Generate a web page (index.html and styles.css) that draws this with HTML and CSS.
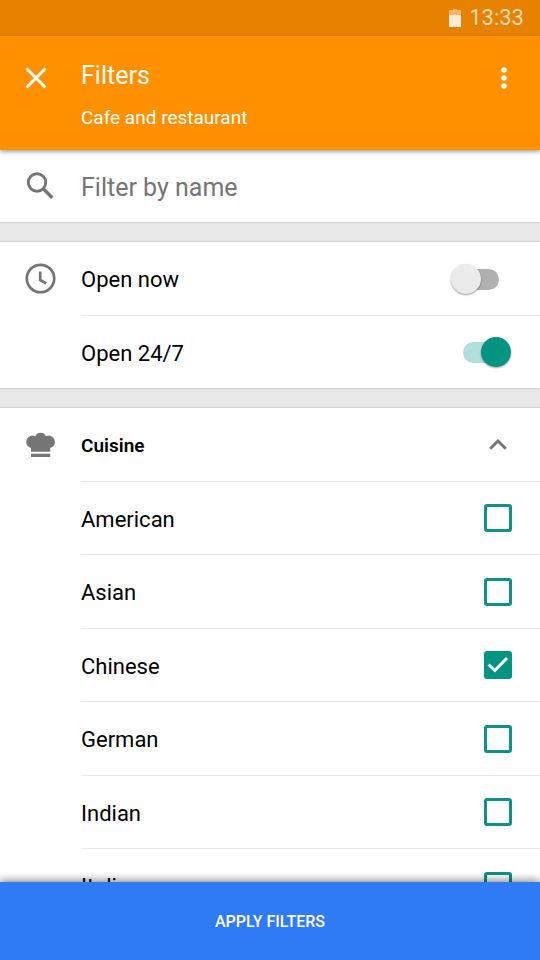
FILE: index.html
```html
<!DOCTYPE html>
<html lang="en">
<head>
<meta charset="utf-8">
<meta name="viewport" content="width=device-width, initial-scale=1">
<title>Filters</title>
<link rel="stylesheet" href="styles.css">
</head>
<body>
<div class="screen">
  <div class="status-bar">
    <svg class="battery" viewBox="0 0 12 18" aria-hidden="true">
      <path d="M4 0h4v1h4v5H0V1h4z" fill="#f3b46a"/>
      <path d="M0 6h12v12H0z" fill="#fdecd5"/>
    </svg>
    <time>13:33</time>
  </div>

  <header class="app-bar">
    <button class="icon-button" type="button" aria-label="Close">
      <svg class="icon-close" viewBox="0 0 22 22"><path d="M1.500 1.500l19 19m0-19l-19 19" fill="none" stroke="#fff" stroke-width="2.900"/></svg>
    </button>
    <div class="titles">
      <h1>Filters</h1>
      <p>Cafe and restaurant</p>
    </div>
    <button class="icon-button" type="button" aria-label="More options">
      <svg class="icon-more" viewBox="0 0 6 22" fill="#fff"><circle cx="3" cy="3" r="2.700"/><circle cx="3" cy="11" r="2.700"/><circle cx="3" cy="19" r="2.700"/></svg>
    </button>
  </header>

  <main class="content">
    <section class="panel search">
      <svg class="lead-icon" viewBox="0 0 32 32" aria-hidden="true" fill="none" stroke="#757575">
        <circle cx="12" cy="12.500" r="8.700" stroke-width="2.900"/>
        <path d="M18 18.500l9.300 9.300" stroke-width="3.400"/>
      </svg>
      <input class="search-input" type="text" placeholder="Filter by name" aria-label="Filter by name">
    </section>

    <section class="panel">
      <div class="row">
        <svg class="lead-icon" viewBox="0 0 32 32" aria-hidden="true" fill="none" stroke="#757575">
          <circle cx="15.500" cy="15.500" r="13.700" stroke-width="2.700"/>
          <path d="M15.200 8.500v8.500l6 3.500" stroke-width="2.700"/>
        </svg>
        <div class="row-body">
          <label for="open-now">Open now</label>
          <input class="switch" id="open-now" type="checkbox" role="switch">
        </div>
      </div>
      <div class="row">
        <div class="row-body">
          <label for="open-always">Open 24/7</label>
          <input class="switch" id="open-always" type="checkbox" role="switch" checked>
        </div>
      </div>
    </section>

    <section class="panel">
      <div class="row row-heading">
        <svg class="lead-icon" viewBox="0 0 32 32" aria-hidden="true" fill="#757575">
          <path d="M6 22.700V19A6.300 6.300 0 0 1 7.500 6.600Q9 6.600 10.300 7.200A5.800 5.800 0 0 1 20.900 7.200Q22.200 6.600 23.700 6.600A6.300 6.300 0 0 1 25.200 19V22.700z"/>
          <path d="M6 24.700h19.200v3.300H6z"/>
        </svg>
        <div class="row-body">
          <h2>Cuisine</h2>
          <button class="icon-button" type="button" aria-label="Collapse cuisine" aria-expanded="true">
            <svg class="icon-chevron" viewBox="0 0 18 12"><path d="M1.200 9.800L9 2l7.800 7.800" fill="none" stroke="#757575" stroke-width="2.900"/></svg>
          </button>
        </div>
      </div>
      <ul class="options">
        <li class="row-body"><label for="american">American</label><input class="check" id="american" type="checkbox"></li>
        <li class="row-body"><label for="asian">Asian</label><input class="check" id="asian" type="checkbox"></li>
        <li class="row-body"><label for="chinese">Chinese</label><span class="check-wrap"><input class="check" id="chinese" type="checkbox" checked><svg class="tick" viewBox="0 0 28 28" aria-hidden="true"><path d="M4.500 13.500l6.300 6L23 7" fill="none" stroke="#fff" stroke-width="3"/></svg></span></li>
        <li class="row-body"><label for="german">German</label><input class="check" id="german" type="checkbox"></li>
        <li class="row-body"><label for="indian">Indian</label><input class="check" id="indian" type="checkbox"></li>
        <li class="row-body"><label for="italian">Italian</label><input class="check" id="italian" type="checkbox"></li>
      </ul>
    </section>
  </main>

  <button class="apply" type="button">APPLY FILTERS</button>
</div>
</body>
</html>
```
FILE: styles.css
```css
* {
  box-sizing: border-box;
}

body {
  margin: 0;
  background: #e8e8e8;
  color: #000;
  font-family: Roboto, "Liberation Sans", sans-serif;
  font-size: 22px;
  line-height: 28px;
}

h1,
h2,
p,
ul {
  margin: 0;
  padding: 0;
}

button,
input {
  margin: 0;
  padding: 0;
  border: 0;
  font-family: inherit;
}

svg {
  display: block;
  flex: none;
}

.screen {
  display: flex;
  flex-direction: column;
  height: 100vh;
}

.status-bar {
  display: flex;
  justify-content: flex-end;
  align-items: center;
  gap: 8px;
  height: 36px;
  padding: 0 16px;
  flex: none;
  background: #e68200;
  color: #fbdcb2;
}

.battery {
  width: 12px;
  height: 18px;
}

.status-bar time {
  font-size: 22px;
}

.app-bar {
  position: relative;
  z-index: 1;
  display: flex;
  align-items: flex-start;
  flex: none;
  padding: 24px 12px 20px;
  background: #ff9000;
  color: #fff;
  box-shadow: 0 2px 4px rgba(0, 0, 0, 0.35);
}

.icon-button {
  display: grid;
  place-items: center;
  flex: none;
  width: 48px;
  height: 36px;
  background: none;
}

.icon-close {
  width: 22px;
  height: 22px;
}

.icon-more {
  width: 6px;
  height: 22px;
}

.icon-chevron {
  width: 18px;
  height: 12px;
}

.titles {
  flex: 1;
  display: grid;
  gap: 14px;
  padding-left: 21px;
}

.titles h1 {
  font-size: 25px;
  font-weight: 400;
  line-height: 32px;
}

.titles p {
  font-size: 19px;
  line-height: 24px;
}

.content {
  flex: 1;
  min-height: 0;
  display: flex;
  flex-direction: column;
  gap: 20px;
  overflow-y: auto;
  scrollbar-width: none;
}

.panel {
  flex: none;
  background: #fff;
  box-shadow: 0 0 2px rgba(0, 0, 0, 0.3);
}

.search {
  display: flex;
  align-items: center;
  height: 72px;
}

.lead-icon {
  width: 32px;
  height: 32px;
  margin-left: 25px;
}

.search-input {
  flex: 1;
  min-width: 0;
  height: 48px;
  margin-left: 24px;
  padding-top: 2px;
  background: none;
  color: #000;
  font-size: 25px;
  outline: none;
}

.search-input::placeholder {
  color: #757575;
  opacity: 1;
}

.row {
  display: flex;
  justify-content: flex-end;
  align-items: center;
  height: 73px;
}

.row-heading {
  height: 74px;
}

.row-body {
  display: flex;
  justify-content: space-between;
  align-items: center;
  height: 100%;
  padding-right: 28px;
}

.row-body label {
  padding-top: 3px;
}

.row .row-body {
  flex: 1;
  margin-left: 81px;
  padding-right: 29px;
}

.row .lead-icon + .row-body {
  margin-left: 24px;
}

.row + .row .row-body {
  border-top: 1px solid #e9e9e9;
}

.row-heading .row-body,
.options .row-body {
  border-bottom: 1px solid #e9e9e9;
}

.row-heading .row-body {
  padding-right: 18px;
}

h2 {
  padding-top: 2px;
  font-size: 19px;
  font-weight: 600;
}

.options {
  display: grid;
  grid-auto-rows: 73px 74px;
  padding-left: 81px;
  list-style: none;
}

.switch {
  appearance: none;
  position: relative;
  width: 60px;
  height: 30px;
}

.switch::before {
  content: "";
  position: absolute;
  inset: 5px 12px 4px;
  border-radius: 11px;
  background: #b0b0b0;
}

.switch::after {
  content: "";
  position: absolute;
  top: 0;
  left: 0;
  width: 30px;
  height: 30px;
  border-radius: 50%;
  background: #ebebeb;
  box-shadow: 0 1px 2px rgba(0, 0, 0, 0.4);
}

.switch:checked::before {
  background: #b2dfdb;
}

.switch:checked::after {
  left: 30px;
  background: #009483;
}

.check {
  appearance: none;
  display: block;
  width: 28px;
  height: 28px;
  border: 3px solid #0f9284;
  border-radius: 3px;
}

.check:checked {
  background: #009483;
  border-color: #009483;
}

.check-wrap {
  position: relative;
}

.tick {
  position: absolute;
  inset: 0;
  visibility: hidden;
  pointer-events: none;
}

.check:checked + .tick {
  visibility: visible;
}

.apply {
  position: relative;
  z-index: 1;
  flex: none;
  height: 78px;
  background: #2f7af5;
  color: #fff;
  font-size: 16px;
  font-weight: 500;
  box-shadow: 0 -2px 8px rgba(0, 0, 0, 0.45);
}
```
